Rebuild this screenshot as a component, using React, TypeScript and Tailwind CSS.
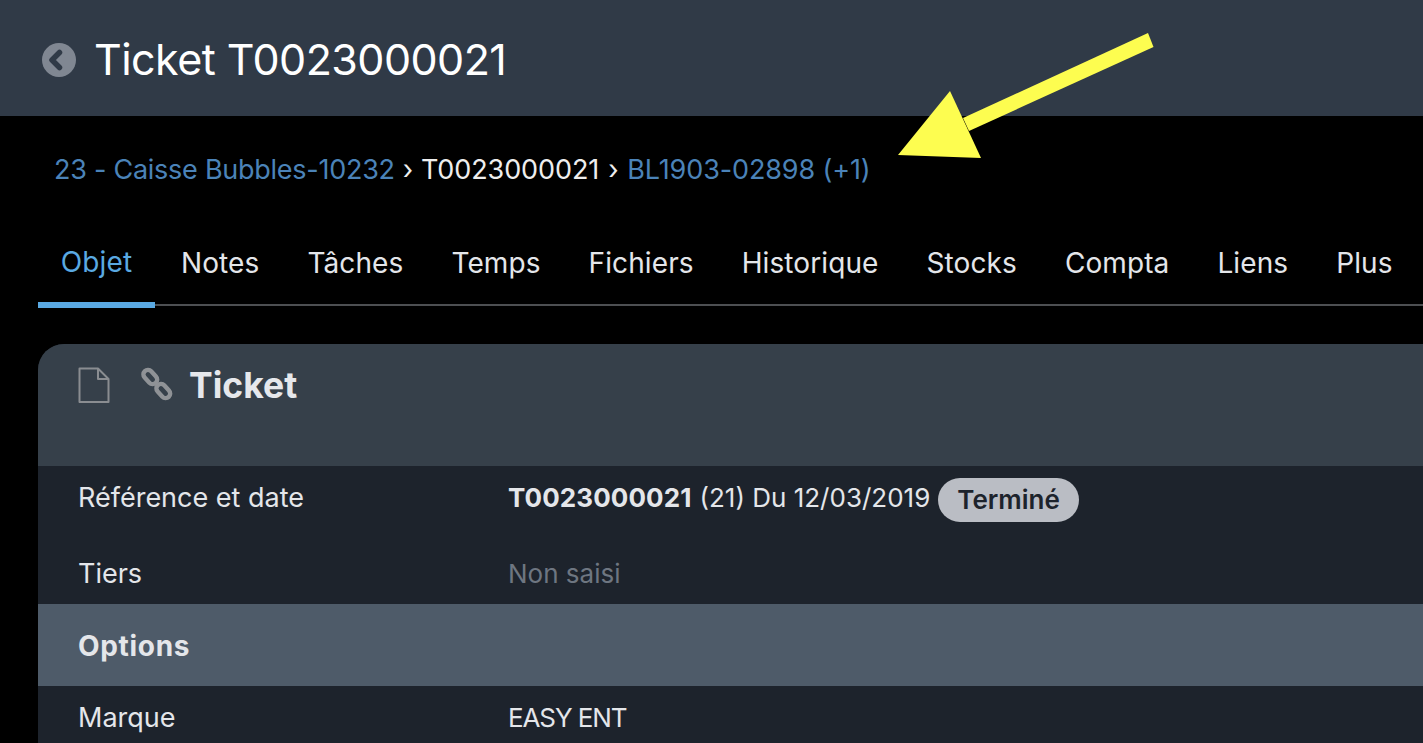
const tabs = ["Notes", "Tâches", "Temps", "Fichiers", "Historique", "Stocks", "Compta", "Liens", "Plus"];

const Arrow = () => (
  <svg className="absolute left-[880px] top-[20px]" width="300" height="150" viewBox="0 0 300 150">
    <path d="M268 13 L273.5 27 L89 111 L83 98 Z" fill="#fdfd50" />
    <path d="M70 71 L101 138 L18 135 Z" fill="#fdfd50" />
  </svg>
);

const BackIcon = () => (
  <svg width="34" height="34" viewBox="0 0 34 34">
    <circle cx="17" cy="17" r="17" fill="#808792" />
    <path d="M17.5 9.5 L10 17 L17.5 24.5" fill="none" stroke="#303a47" strokeWidth="5.5" strokeLinecap="round" strokeLinejoin="round" />
  </svg>
);

const LinkIcon = () => (
  <svg width="34" height="34" viewBox="0 0 34 34" fill="none" stroke="#8f9296" strokeWidth="4.4">
    <rect x="2.3" y="5.5" width="16" height="9" rx="4.5" transform="rotate(47 10.3 10)" />
    <rect x="15.3" y="19.5" width="16" height="9" rx="4.5" transform="rotate(47 23.3 24)" />
  </svg>
);

const FileIcon = () => (
  <svg width="32" height="37" viewBox="0 0 32 37" fill="none" stroke="#8a8d91" strokeWidth="2">
    <path d="M1.5 1.5 H20 L30.5 12 V35 H1.5 Z" strokeLinejoin="round" />
    <path d="M20 1.5 V12 H30.5" strokeLinejoin="round" />
  </svg>
);

export default function App() {
  return (
    <div className="relative h-[743px] overflow-hidden bg-black font-['Inter',sans-serif] text-[#e4e6ea]">
      <header className="flex h-[116px] items-center bg-[#303a47] pl-[42px]">
        <span className="mr-[18px] mt-[4px]">
          <BackIcon />
        </span>
        <h1 className="mt-[3px] text-[43px] font-normal tracking-[-0.55px] text-white">Ticket T0023000021</h1>
      </header>

      <div className="flex h-[107px] items-center pl-[54px] pt-[2px] text-[27px] tracking-[-0.26px]">
        <a className="text-[#4b83b8]">23 - Caisse Bubbles-10232</a>
        <span className="mx-[8px] text-[#eeeeee]">›</span>
        <span className="tracking-[-0.1px] text-[#eeeeee]">T0023000021</span>
        <span className="mx-[9px] text-[#eeeeee]">›</span>
        <a className="tracking-[-0.12px] text-[#4b83b8]">BL1903-02898 (+1)</a>
      </div>

      <nav className="ml-[38px] flex h-[83px] border-b-2 border-[#4d4f52] text-[28px] tracking-[0.1px]">
        <a className="-mb-[4px] flex w-[117px] items-center justify-center rounded-t-[2px] border-b-[6px] border-[#5aa9e2] pb-[2px] text-[#5aa9e2]">
          Objet
        </a>
        <div className="ml-[26px] flex gap-[48px]">
          {tabs.map((t) => (
            <a key={t} className="flex items-center pb-[2px]">
              {t}
            </a>
          ))}
        </div>
      </nav>

      <section className="ml-[38px] mt-[38px] overflow-hidden rounded-tl-[26px] bg-[#1d232c] text-[27px] leading-[40px]">
        <div className="flex h-[122px] items-start gap-[30px] bg-[#36404a] pl-[40px] pt-[23px]">
          <FileIcon />
          <div className="flex items-start gap-[15px]">
            <LinkIcon />
            <h2 className="text-[35.5px] leading-[38px] font-bold text-[#e6e8ec]">Ticket</h2>
          </div>
        </div>
        <div className="flex h-[66px] items-center pb-[2px] pl-[40px]">
          <span className="w-[430px]">Référence et date</span>
          <b className="text-[26px] font-bold tracking-[0.1px]">T0023000021</b>
          <span className="ml-[8px] text-[26px]">(21) Du 12/03/2019</span>
          <span className="ml-[8px] mt-[4px] rounded-full bg-[#babdc4] px-[19px] py-[5px] text-[26px] leading-[34px] font-semibold text-[#1d232c]">
            Terminé
          </span>
        </div>
        <div className="flex h-[72px] items-center pl-[40px] pt-[12px]">
          <span className="w-[430px]">Tiers</span>
          <span className="text-[26px] text-[#6e7681]">Non saisi</span>
        </div>
        <div className="flex h-[82px] items-center bg-[#4e5b69] pl-[40px] pt-[2px] text-[28px] font-bold tracking-[0.7px]">Options</div>
        <div className="flex h-[62px] items-center pl-[40px] pt-[2px]">
          <span className="w-[430px]">Marque</span>
          <span className="text-[26px] tracking-[-1.1px]">EASY ENT</span>
        </div>
      </section>

      <Arrow />
    </div>
  );
}
